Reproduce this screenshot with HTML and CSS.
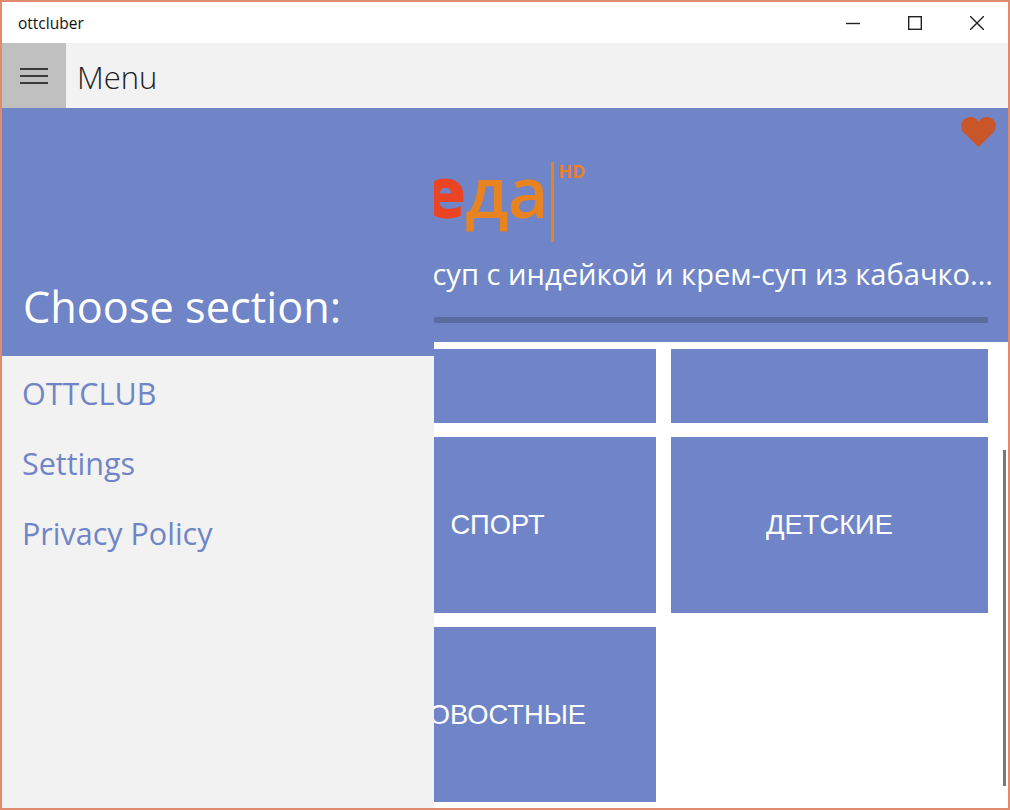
FILE: index.html
```html
<!DOCTYPE html>
<html lang="ru">
<head>
<meta charset="utf-8">
<title>ottcluber</title>
<link rel="stylesheet" href="styles.css">
</head>
<body>
<div class="window">
  <header class="titlebar">
    <span class="app-name">ottcluber</span>
    <div class="win-controls">
      <button class="win-btn" aria-label="Minimize"><svg width="14" height="14" viewBox="0 0 14 14"><path d="M0 7.5H14" stroke="#222" stroke-width="1.4"/></svg></button>
      <button class="win-btn" aria-label="Maximize"><svg width="14" height="14" viewBox="0 0 14 14"><rect x="0.7" y="0.7" width="12.6" height="12.6" fill="none" stroke="#222" stroke-width="1.4"/></svg></button>
      <button class="win-btn" aria-label="Close"><svg width="14" height="14" viewBox="0 0 14 14"><path d="M0 0L14 14M14 0L0 14" stroke="#222" stroke-width="1.4"/></svg></button>
    </div>
  </header>
  <div class="menubar">
    <button class="burger" aria-label="Menu"><span></span><span></span><span></span></button>
    <span class="menu-label">Menu</span>
  </div>
  <div class="body">
    <main class="content">
      <section class="hero">
        <svg class="heart" width="35" height="30" viewBox="0 0 36 31" preserveAspectRatio="none"><path d="M18 31L3.500 16.800C-1 12.300-.6 6.500 2.500 3.200 6-.7 12.500-1 16 2.600L18 4.800 20 2.600C23.500-1 30-.7 33.500 3.200 36.600 6.500 37 12.300 32.500 16.800Z" fill="#c95628"/></svg>
        <div class="logo">
          <span class="logo-word"><b class="logo-e">е</b>да</span>
          <span class="logo-line"></span>
          <span class="logo-hd">HD</span>
        </div>
        <div class="show-title"><span>Овощной суп с индейкой и крем-суп из кабачко...</span></div>
        <div class="progress"></div>
      </section>
      <section class="tiles">
        <div class="tile"></div>
        <div class="tile"></div>
        <div class="tile">СПОРТ</div>
        <div class="tile">ДЕТСКИЕ</div>
        <div class="tile">НОВОСТНЫЕ</div>
      </section>
      <div class="scrollbar"></div>
    </main>
    <aside class="drawer">
      <div class="drawer-head">Choose section:</div>
      <nav class="drawer-nav">
        <a class="drawer-link">OTTCLUB</a>
        <a class="drawer-link">Settings</a>
        <a class="drawer-link">Privacy Policy</a>
      </nav>
    </aside>
  </div>
</div>
</body>
</html>
```
FILE: styles.css
```css
* { box-sizing: border-box; }
html, body { margin: 0; padding: 0; }
body { width: 1010px; height: 810px; overflow: hidden; font-family: "Open Sans", "Noto Sans", sans-serif; background: #fff; }
.window { width: 1010px; height: 810px; border: 2px solid #e08b6d; display: flex; flex-direction: column; background: #fff; }
.titlebar { height: 41px; flex: none; display: flex; align-items: center; justify-content: space-between; background: #fff; }
.app-name { font-size: 15.500px; color: #111; padding-left: 16px; }
.win-controls { display: flex; }
.win-btn { width: 62px; height: 41px; border: 0; background: none; padding: 0; display: flex; align-items: center; justify-content: center; }
.menubar { height: 65px; flex: none; display: flex; align-items: center; background: #f2f2f2; }
.burger { width: 64px; height: 65px; border: 0; padding: 0; background: #c0c0c0; display: flex; flex-direction: column; justify-content: center; align-items: center; gap: 5px; }
.burger span { display: block; width: 28px; height: 2px; background: #3c3c3c; }
.menu-label { font-size: 31px; font-weight: 300; color: #222; padding: 2px 0 0 11px; }
.body { flex: 1; position: relative; overflow: hidden; }
.content { height: 100%; background: #fff; }
.hero { position: relative; height: 234px; background: #7085c7; padding: 54px 20px 0 0; }
.heart { position: absolute; right: 12px; top: 9px; }
.logo { display: flex; align-items: flex-start; height: 82px; padding-left: 421px; color: #e8831f; }
.logo-word { font-size: 70px; font-weight: 550; line-height: 58px; letter-spacing: -1px; }
.logo-e { color: #ea4424; font-weight: 800; }
.logo-line { flex: none; width: 3px; height: 80px; background: #e8831f; margin-left: 4px; }
.logo-hd { font-size: 18px; font-weight: 700; line-height: 18px; margin: 0 0 0 4px; }
.show-title { display: flex; justify-content: flex-end; white-space: nowrap; overflow: hidden; color: #fff; font-size: 29.100px; line-height: 40px; margin-right: -5px; margin-top: 10px; }
.progress { height: 6px; margin: 23px 0 0 20px; background: #5a6ca0; }
.tiles { display: grid; grid-template-columns: 317px 317px; grid-template-rows: 74px 176px 175px; gap: 14px 15px; justify-content: end; padding: 7px 20px 0 0; }
.tile { background: #7085c7; color: #fff; font-family: "Liberation Sans", Arial, sans-serif; font-size: 27.300px; display: flex; align-items: center; justify-content: center; }
.scrollbar { position: absolute; right: 2px; top: 342px; width: 3px; height: 336px; background: #777; }
.drawer { position: absolute; left: 0; top: 0; bottom: 0; width: 432px; background: #f2f2f2; display: flex; flex-direction: column; }
.drawer-head { height: 248px; flex: none; background: #7085c7; color: #fff; font-size: 43.300px; display: flex; align-items: flex-end; padding: 0 0 20px 21px; }
.drawer-nav { display: flex; flex-direction: column; padding: 2px 0 0 20px; }
.drawer-link { height: 70px; display: flex; align-items: center; font-size: 30.500px; color: #7085c7; }
```
